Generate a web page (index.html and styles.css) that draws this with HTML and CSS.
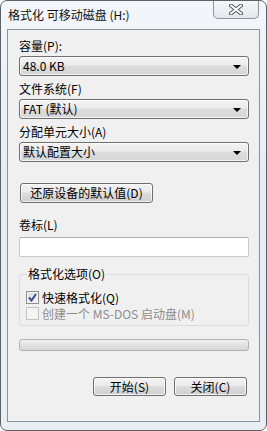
FILE: index.html
```html
<!DOCTYPE html>
<html lang="zh-CN">
<head>
  <meta charset="UTF-8" />
  <title>格式化 可移动磁盘 (H:)</title>
  <link rel="stylesheet" href="styles.css">
</head>
<body>
  <div class="window">
    <!-- title bar -->
    <div class="titlebar">
      <span class="title">格式化 可移动磁盘 (H:)</span>
      <div class="close-btn">
        <svg width="14" height="11" viewBox="0 0 14 11">
          <path d="M2 1.5 L12 9.5 M12 1.5 L2 9.5" stroke="#5a5f66" stroke-width="4" stroke-linecap="round"/>
          <path d="M2 1.5 L12 9.5 M12 1.5 L2 9.5" stroke="#ffffff" stroke-width="2" stroke-linecap="round"/>
        </svg>
      </div>
    </div>

    <!-- dialog body -->
    <div class="client">
      <label class="field-label">容量(P):</label>
      <div class="combo"><span>48.0 KB</span><i class="arrow"></i></div>

      <label class="field-label">文件系统(F)</label>
      <div class="combo"><span>FAT (默认)</span><i class="arrow"></i></div>

      <label class="field-label">分配单元大小(A)</label>
      <div class="combo"><span>默认配置大小</span><i class="arrow"></i></div>

      <button class="btn btn-restore">还原设备的默认值(D)</button>

      <label class="field-label label-volume">卷标(L)</label>
      <div class="textbox"></div>

      <fieldset class="group">
        <legend>格式化选项(O)</legend>
        <div class="check-row">
          <span class="checkbox checked">
            <svg width="9" height="9" viewBox="0 0 9 9">
              <path d="M1 4.5 L3.5 7.5 L8 1" fill="none" stroke="#3b4f8f" stroke-width="2"/>
            </svg>
          </span>
          <span>快速格式化(Q)</span>
        </div>
        <div class="check-row disabled">
          <span class="checkbox"></span>
          <span>创建一个 MS-DOS 启动盘(M)</span>
        </div>
      </fieldset>

      <div class="progress"></div>

      <div class="actions">
        <button class="btn btn-action">开始(S)</button>
        <button class="btn btn-action">关闭(C)</button>
      </div>
    </div>
  </div>
</body>
</html>
```

FILE: styles.css
```css
body {
  margin: 0;
  font-family: "Noto Sans CJK SC", "Liberation Sans", sans-serif;
  font-size: 12px;
  color: #000;
  background: #fff;
}

.window {
  width: 267px;
  height: 431px;
  box-sizing: border-box;
  border: 1px solid #5e6268;
  border-radius: 7px;
  background: linear-gradient(180deg, #f3f6fa 0%, #e6edf5 40%, #e9eef4 100%);
  padding: 0 6px 8px 6px;
  display: flex;
  flex-direction: column;
  overflow: hidden;
}

.titlebar {
  height: 28px;
  display: flex;
  justify-content: space-between;
  align-items: flex-start;
}

.title {
  margin-top: 6px;
  margin-left: 1px;
  font-family: "Noto Sans CJK SC", sans-serif;
  font-size: 12px;
  line-height: 16px;
  color: #111;
}

.close-btn {
  width: 46px;
  height: 19px;
  box-sizing: border-box;
  margin-top: -1px;
  margin-right: 1px;
  border: 1px solid #8f959c;
  border-top: none;
  border-radius: 0 0 5px 5px;
  background: linear-gradient(180deg, #f6f8fa 0%, #e3e8ee 100%);
  display: flex;
  align-items: center;
  justify-content: center;
}

.client {
  flex: 1;
  border: 1px solid #8d9298;
  background: #f0f0f0;
  padding: 9px 10px 0 11px;
  display: flex;
  flex-direction: column;
}

.field-label {
  display: block;
  height: 14px;
  line-height: 14px;
  margin-bottom: 3px;
}

.combo {
  height: 20px;
  box-sizing: border-box;
  border: 1px solid #707070;
  border-radius: 3px;
  background: linear-gradient(180deg, #f3f3f3 0%, #ebebeb 45%, #dddddd 50%, #d6d6d6 100%);
  display: flex;
  align-items: center;
  justify-content: space-between;
  padding: 0 7px 0 3px;
  margin-bottom: 6px;
  line-height: 16px;
  box-shadow: inset 0 0 0 1px rgba(255, 255, 255, 0.7);
}

.arrow {
  width: 0;
  height: 0;
  border-left: 4px solid transparent;
  border-right: 4px solid transparent;
  border-top: 4px solid #000;
  margin-top: 1px;
}

.btn {
  font-family: "Noto Sans CJK SC", sans-serif;
  font-size: 12px;
  color: #000;
  height: 20px;
  box-sizing: border-box;
  border: 1px solid #707070;
  border-radius: 3px;
  background: linear-gradient(180deg, #f2f2f2 0%, #ebebeb 45%, #dddddd 50%, #cfcfcf 100%);
  box-shadow: inset 0 0 0 1px rgba(255, 255, 255, 0.7);
  padding: 0;
  line-height: 16px;
}

.btn-restore {
  width: 133px;
  margin-top: 15px;
  margin-left: 1px;
  align-self: flex-start;
}

.label-volume {
  margin-top: 15px;
  margin-bottom: 5px;
}

.textbox {
  height: 20px;
  box-sizing: border-box;
  border: 1px solid #c5cbd2;
  border-top-color: #abadb3;
  border-radius: 2px;
  background: #fff;
}

.group {
  margin: 10px 0 0 0;
  padding: 8px 0 5px 6px;
  border: 1px solid #d5dfe5;
  border-radius: 3px;
  height: 59px;
  box-sizing: border-box;
}

.group legend {
  padding: 0 1px;
  margin-left: 1px;
  line-height: 14px;
}

.check-row {
  display: flex;
  align-items: center;
  height: 16px;
  gap: 3px;
}

.check-row.disabled {
  color: #8d8d8d;
}

.checkbox {
  width: 13px;
  height: 13px;
  box-sizing: border-box;
  border: 1px solid #8e8f8f;
  background: linear-gradient(135deg, #dcdcdc 0%, #f6f6f6 100%);
  display: flex;
  align-items: center;
  justify-content: center;
  box-shadow: inset 0 0 0 1px #f4f4f4;
}

.check-row.disabled .checkbox {
  border-color: #c4c4c4;
  background: #f4f4f4;
}

.progress {
  margin-top: 13px;
  height: 12px;
  box-sizing: border-box;
  border: 1px solid #b2b2b2;
  border-radius: 3px;
  background: linear-gradient(180deg, #f0f0f0 0%, #e2e2e2 50%, #d8d8d8 100%);
}

.actions {
  margin-top: 26px;
  margin-right: 2px;
  display: flex;
  justify-content: flex-end;
  gap: 8px;
}

.btn-action {
  width: 73px;
  height: 19px;
}
```
